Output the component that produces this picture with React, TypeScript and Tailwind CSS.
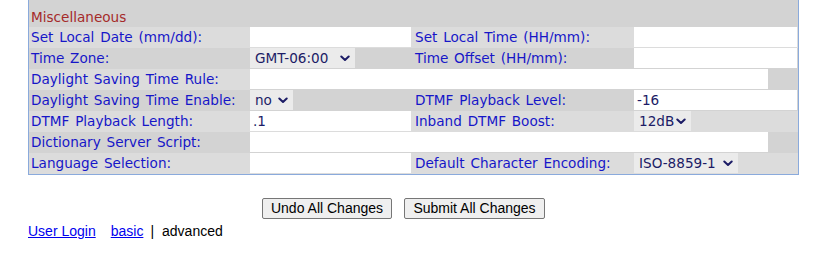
import React from "react";

const LIGHT = "bg-[#dcdcdc]";
const DARK = "bg-[#d3d3d3]";

function Chevron() {
  return (
    <svg width="10" height="7" viewBox="0 0 10 7" className="shrink-0">
      <path d="M1.3 1.5 L5 5 L8.7 1.5" fill="none" stroke="#1c1c66" strokeWidth="2" strokeLinecap="round" strokeLinejoin="round" />
    </svg>
  );
}

function Sel({ value, w }: { value: string; w: string }) {
  return (
    <div className={`${w} h-[20px] bg-[#ebebeb] flex items-center justify-between pl-[5px] pr-[5px] text-[#1c1c66]`}>
      <span>{value}</span>
      <Chevron />
    </div>
  );
}

function Inp({ value = "", w = "w-full" }: { value?: string; w?: string }) {
  return (
    <div className={`${w} h-[20px] bg-white flex items-center pl-[3px] text-[#1c1c66]`}>{value}</div>
  );
}

function Label({ children, right }: { children: React.ReactNode; right?: boolean }) {
  return (
    <div className={`h-full flex items-center ${right ? "pl-[4px]" : "pl-[2px]"} text-[#1616c8] whitespace-nowrap`}>
      {children}
    </div>
  );
}

function Row({ light, children }: { light: boolean; children: React.ReactNode }) {
  return (
    <div className={`grid grid-cols-[221px_161px_223px_164px] h-[21px] ${light ? LIGHT : DARK}`}>{children}</div>
  );
}

export default function App() {
  return (
    <div
      className="w-[835px] h-[254px] bg-white overflow-hidden"
      style={{ fontFamily: '"DejaVu Sans", Verdana, sans-serif' }}
    >
      <div className="ml-[28px] w-[771px] border-x border-b border-[#8aaadc] bg-[#d3d3d3] text-[13.6px] leading-[17px] [word-spacing:1.5px]">
        <div className="h-[27px] pt-[9px] pl-[2px] text-[#a52a2a]">Miscellaneous</div>

        <Row light>
          <Label>Set Local Date (mm/dd):</Label>
          <div><Inp /></div>
          <Label right>Set Local Time (HH/mm):</Label>
          <div className="pr-[1px]"><Inp /></div>
        </Row>

        <Row light={false}>
          <Label>Time Zone:</Label>
          <div><Sel value="GMT-06:00" w="w-[105px]" /></div>
          <Label right>Time Offset (HH/mm):</Label>
          <div className="pr-[1px]"><Inp /></div>
        </Row>

        <Row light>
          <Label>Daylight Saving Time Rule:</Label>
          <div className={`col-span-3 flex ${DARK}`}>
            <Inp w="w-[518px]" />
          </div>
        </Row>

        <Row light={false}>
          <Label>Daylight Saving Time Enable:</Label>
          <div><Sel value="no" w="w-[43px]" /></div>
          <Label right>DTMF Playback Level:</Label>
          <div className="pr-[1px]"><Inp value="-16" /></div>
        </Row>

        <Row light>
          <Label>DTMF Playback Length:</Label>
          <div><Inp value=".1" /></div>
          <Label right>Inband DTMF Boost:</Label>
          <div><Sel value="12dB" w="w-[57px]" /></div>
        </Row>

        <Row light={false}>
          <Label>Dictionary Server Script:</Label>
          <div className={`col-span-3 flex ${DARK}`}>
            <Inp w="w-[518px]" />
          </div>
        </Row>

        <Row light>
          <Label>Language Selection:</Label>
          <div><Inp /></div>
          <Label right>Default Character Encoding:</Label>
          <div><Sel value="ISO-8859-1" w="w-[104px]" /></div>
        </Row>
      </div>

      <div
        className="mt-[23px] pl-[262px] flex gap-[12px] text-[14px] leading-[17px]"
        style={{ fontFamily: '"Liberation Sans", Arial, sans-serif' }}
      >
        <button className="w-[130px] h-[21px] bg-[#efefef] border border-[#767676] rounded-[2px] text-black">
          Undo All Changes
        </button>
        <button className="w-[141px] h-[21px] bg-[#efefef] border border-[#767676] rounded-[2px] text-black">
          Submit All Changes
        </button>
      </div>

      <div
        className="mt-[4px] ml-[28px] flex text-[14px] leading-[16px] text-black"
        style={{ fontFamily: '"Liberation Sans", Arial, sans-serif' }}
      >
        <a href="#" className="text-[#0000ee] underline">User Login</a>
        <a href="#" className="ml-[15px] text-[#0000ee] underline">basic</a>
        <span className="ml-[7px]">|</span>
        <span className="ml-[8px]">advanced</span>
      </div>
    </div>
  );
}
